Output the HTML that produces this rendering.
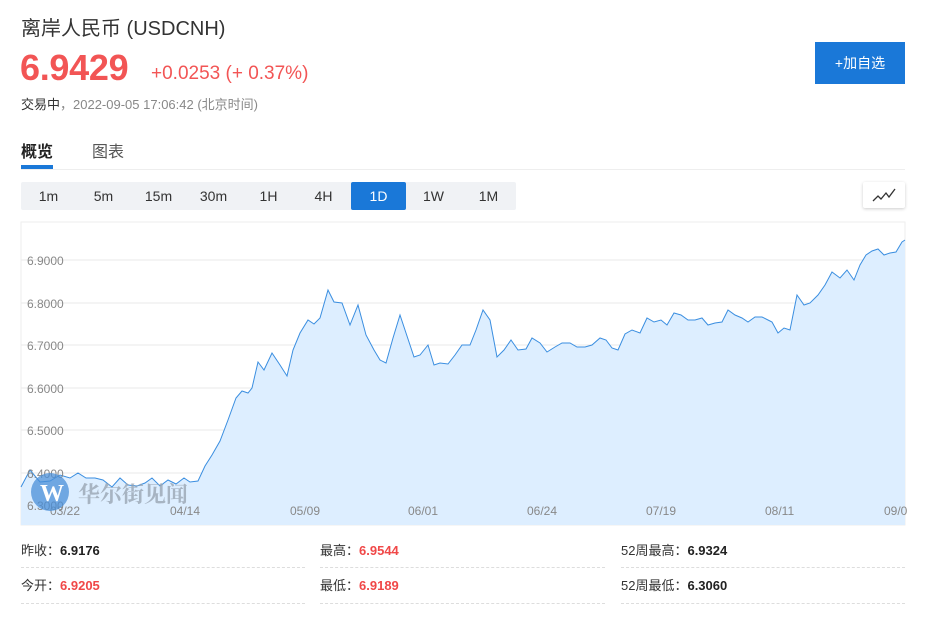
<!DOCTYPE html>
<html><head><meta charset="utf-8"><style>
*{margin:0;padding:0;box-sizing:border-box}
body{width:930px;height:624px;background:#fff;font-family:"Liberation Sans","Noto Sans CJK SC",sans-serif;color:#333;position:relative;overflow:hidden}
.abs{position:absolute}
.tf{position:absolute;top:182px;height:28px;font-size:14px;color:#333;text-align:center;line-height:28px;width:55px}
.row{position:absolute;font-size:13px;color:#333}
.row b{color:#222}
.row b.r{color:#f04848}
.dash{position:absolute;height:0;border-top:1px dashed #ddd}
</style></head><body>
<div class="abs" style="left:21px;top:12px;font-size:20px;color:#333">离岸人民币 (USDCNH)</div>
<div class="abs" style="left:20px;top:47px;font-size:36px;font-weight:bold;color:#f25555;letter-spacing:-0.3px">6.9429</div>
<div class="abs" style="left:151px;top:63px;font-size:19px;color:#f25555">+0.0253 (+ 0.37%)</div>
<div class="abs" style="left:21px;top:94px;font-size:13px;color:#333">交易中<span style="color:#888">，2022-09-05 17:06:42 (北京时间)</span></div>
<div class="abs" style="left:815px;top:42px;width:90px;height:42px;background:#1a78d8;color:#fff;font-size:14px;text-align:center;line-height:42px">+加自选</div>
<div class="abs" style="left:21px;top:138px;font-size:16px;font-weight:bold;color:#222">概览</div>
<div class="abs" style="left:21px;top:165px;width:32px;height:4px;background:#1a78d8"></div>
<div class="abs" style="left:92px;top:138px;font-size:16px;color:#555">图表</div>
<div class="abs" style="left:21px;top:169px;width:884px;height:1px;background:#eee"></div>
<div class="abs" style="left:21px;top:182px;width:495px;height:28px;background:#f0f2f5;border-radius:2px"></div>
<div class="tf" style="left:21px">1m</div><div class="tf" style="left:76px">5m</div><div class="tf" style="left:131px">15m</div><div class="tf" style="left:186px">30m</div><div class="tf" style="left:241px">1H</div><div class="tf" style="left:296px">4H</div>
<div class="tf" style="left:351px;background:#1a78d8;color:#fff;border-radius:2px">1D</div>
<div class="tf" style="left:406px">1W</div><div class="tf" style="left:461px">1M</div>
<div class="abs" style="left:863px;top:182px;width:42px;height:26px;background:#fff;box-shadow:0 1px 3px rgba(0,0,0,.2);border-radius:2px">
<svg width="42" height="26"><path d="M10 19 L15 14 L18 17 L23 11 L26 15 L32 7" fill="none" stroke="#333" stroke-width="1.3"/></svg></div>
<svg class="abs" style="left:0;top:0" width="930" height="530">
<rect x="21" y="222" width="884" height="303" fill="#fff" stroke="#eee"/>
<g stroke="#eaeaea" stroke-width="1">
<line x1="21" y1="260" x2="905" y2="260"/><line x1="21" y1="303" x2="905" y2="303"/><line x1="21" y1="345" x2="905" y2="345"/><line x1="21" y1="388" x2="905" y2="388"/><line x1="21" y1="430" x2="905" y2="430"/><line x1="21" y1="473" x2="905" y2="473"/></g>
<polygon fill="#ddeeff" points="21,525 21,487 30,470 40,482 50,481 60,475 70,478 78,473 86,478 95,478 103,480 112,487 120,478 128,485 137,486 145,483 152,478 160,486 168,480 176,484 184,478 190,482 198,481 205,466 212,455 220,441 228,420 236,398 242,391 248,393 252,388 258,362 264,370 272,353 280,365 287,376 293,350 300,333 308,320 314,324 320,318 328,290 334,302 342,303 350,325 358,305 366,335 374,350 380,360 386,363 393,338 400,315 406,333 414,357 420,355 428,345 434,365 440,363 448,364 455,355 462,345 470,345 476,330 483,310 490,320 497,357 504,350 511,340 518,350 526,349 532,338 540,343 547,352 555,347 562,343 570,343 577,347 585,347 592,345 600,338 606,340 612,348 618,350 625,334 632,330 640,333 647,318 654,322 661,320 667,325 674,313 681,315 688,320 695,320 702,318 708,325 715,323 722,322 728,310 735,315 742,318 748,322 755,317 762,317 768,320 772,322 778,333 784,328 790,330 797,295 804,305 810,303 818,295 825,285 832,272 840,278 847,270 854,280 860,265 866,255 872,251 878,249 884,255 890,253 896,252 902,242 905,240 905,525"/>
<polyline fill="none" stroke="#3a8ee0" stroke-width="1" points="21,487 30,470 40,482 50,481 60,475 70,478 78,473 86,478 95,478 103,480 112,487 120,478 128,485 137,486 145,483 152,478 160,486 168,480 176,484 184,478 190,482 198,481 205,466 212,455 220,441 228,420 236,398 242,391 248,393 252,388 258,362 264,370 272,353 280,365 287,376 293,350 300,333 308,320 314,324 320,318 328,290 334,302 342,303 350,325 358,305 366,335 374,350 380,360 386,363 393,338 400,315 406,333 414,357 420,355 428,345 434,365 440,363 448,364 455,355 462,345 470,345 476,330 483,310 490,320 497,357 504,350 511,340 518,350 526,349 532,338 540,343 547,352 555,347 562,343 570,343 577,347 585,347 592,345 600,338 606,340 612,348 618,350 625,334 632,330 640,333 647,318 654,322 661,320 667,325 674,313 681,315 688,320 695,320 702,318 708,325 715,323 722,322 728,310 735,315 742,318 748,322 755,317 762,317 768,320 772,322 778,333 784,328 790,330 797,295 804,305 810,303 818,295 825,285 832,272 840,278 847,270 854,280 860,265 866,255 872,251 878,249 884,255 890,253 896,252 902,242 905,240"/>
<g font-size="12" fill="#888" font-family="Liberation Sans,sans-serif">
<text x="27" y="265">6.9000</text><text x="27" y="308">6.8000</text><text x="27" y="350">6.7000</text><text x="27" y="393">6.6000</text><text x="27" y="435">6.5000</text><text x="27" y="478">6.4000</text><text x="27" y="510">6.3000</text>
<text x="50" y="515">03/22</text><text x="170" y="515">04/14</text><text x="290" y="515">05/09</text><text x="408" y="515">06/01</text><text x="527" y="515">06/24</text><text x="646" y="515">07/19</text><text x="765" y="515">08/11</text><text x="884" y="515">09/0</text></g>
<circle cx="50" cy="492" r="19" fill="#4a8fd8" opacity="0.75"/>
<text x="40" y="501" font-size="24" font-weight="bold" fill="#fff" font-family="Liberation Serif,serif">W</text>
<text x="78" y="502" font-size="22" font-weight="bold" fill="#9aa6b4" opacity="0.8" font-family="Noto Serif CJK SC,serif">华尔街见闻</text>
</svg>
<div class="row" style="left:21px;top:540px">昨收：<b>6.9176</b></div>
<div class="row" style="left:320px;top:540px">最高：<b class="r">6.9544</b></div>
<div class="row" style="left:621px;top:540px">52周最高：<b>6.9324</b></div>
<div class="dash" style="left:21px;top:567px;width:284px"></div>
<div class="dash" style="left:320px;top:567px;width:285px"></div>
<div class="dash" style="left:621px;top:567px;width:284px"></div>
<div class="row" style="left:21px;top:575px">今开：<b class="r">6.9205</b></div>
<div class="row" style="left:320px;top:575px">最低：<b class="r">6.9189</b></div>
<div class="row" style="left:621px;top:575px">52周最低：<b>6.3060</b></div>
<div class="dash" style="left:21px;top:603px;width:284px"></div>
<div class="dash" style="left:320px;top:603px;width:285px"></div>
<div class="dash" style="left:621px;top:603px;width:284px"></div>
</body></html>
